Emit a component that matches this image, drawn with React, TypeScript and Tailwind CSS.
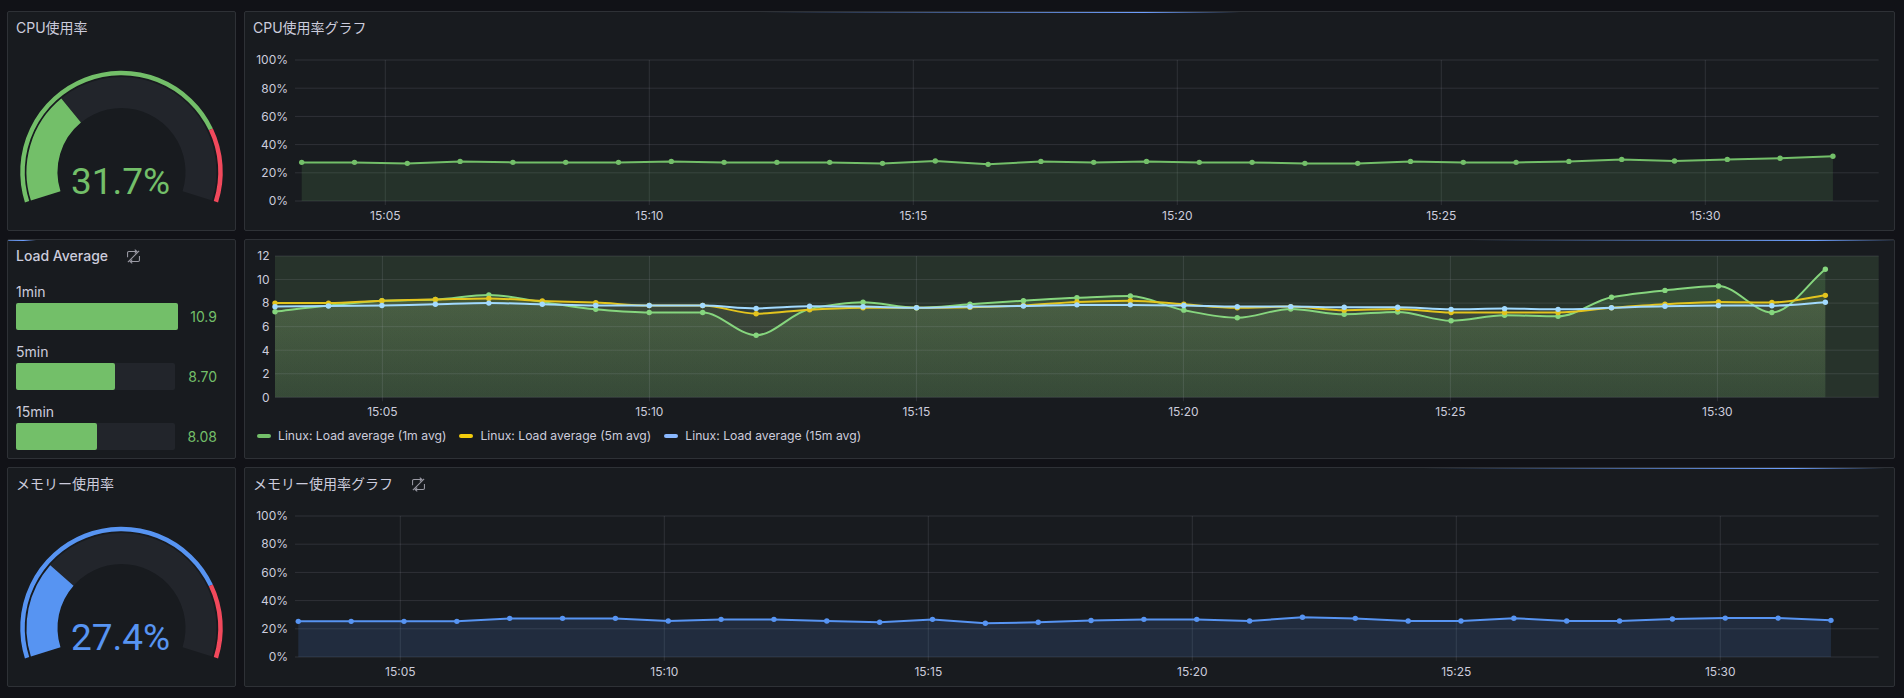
import type { ReactNode } from "react";

const GREEN = "#73BF69";
const BLUE = "#5794F2";
const RED = "#F2495C";
const TRACK = "#22252B";
const GRID = "rgba(204,204,220,0.13)";

const cpuData = [
  27.4, 27.4, 26.7, 28.1, 27.4, 27.4, 27.4, 28.1, 27.4, 27.4, 27.4, 26.7, 28.4, 26, 28.1, 27.4, 28.1,
  27.4, 27.4, 26.7, 26.7, 28.1, 27.4, 27.4, 28.1, 29.5, 28.4, 29.5, 30.3, 31.7,
];
const memData = [
  25.3, 25.3, 25.3, 25.3, 27.4, 27.4, 27.4, 25.5, 26.7, 26.7, 25.5, 24.6, 26.7, 23.9, 24.6, 25.9, 26.7,
  26.7, 25.5, 28.2, 27.4, 25.5, 25.5, 27.5, 25.5, 25.5, 26.9, 27.6, 27.6, 26,
];
const load1 = [
  7.27, 7.8, 8.2, 8.3, 8.7, 8.1, 7.47, 7.2, 7.2, 5.27, 7.5, 8.07, 7.6, 7.9, 8.2, 8.45, 8.6, 7.4, 6.75,
  7.5, 7.05, 7.25, 6.5, 6.96, 6.88, 8.5, 9.08, 9.45, 7.2, 10.87,
];
const load5 = [
  8, 8, 8.2, 8.3, 8.4, 8.18, 8.04, 7.8, 7.8, 7.1, 7.44, 7.6, 7.6, 7.65, 7.8, 8.1, 8.2, 7.9, 7.6, 7.7,
  7.4, 7.5, 7.2, 7.2, 7.2, 7.6, 7.9, 8.1, 8.05, 8.66,
];
const load15 = [
  7.7, 7.75, 7.8, 7.9, 8, 7.9, 7.8, 7.8, 7.8, 7.55, 7.73, 7.7, 7.6, 7.7, 7.75, 7.85, 7.85, 7.8, 7.7,
  7.7, 7.65, 7.65, 7.47, 7.53, 7.47, 7.6, 7.73, 7.8, 7.78, 8.07,
];

type Pt = [number, number];

const linePath = (pts: Pt[]) => "M" + pts.map((p) => p[0].toFixed(1) + " " + p[1].toFixed(1)).join("L");

// same monotone cubic that uPlot's spline gives
const splinePath = (pts: Pt[]) => {
  const n = pts.length;
  const slopes: number[] = [];
  for (let i = 0; i < n - 1; i++) slopes.push((pts[i + 1][1] - pts[i][1]) / (pts[i + 1][0] - pts[i][0]));
  const t: number[] = [slopes[0]];
  for (let i = 1; i < n - 1; i++) {
    t.push(slopes[i - 1] * slopes[i] <= 0 ? 0 : (2 * slopes[i - 1] * slopes[i]) / (slopes[i - 1] + slopes[i]));
  }
  t.push(slopes[n - 2]);
  let d = "M" + pts[0][0].toFixed(1) + " " + pts[0][1].toFixed(1);
  for (let i = 0; i < n - 1; i++) {
    const h = (pts[i + 1][0] - pts[i][0]) / 3;
    d +=
      "C" +
      [pts[i][0] + h, pts[i][1] + t[i] * h, pts[i + 1][0] - h, pts[i + 1][1] - t[i + 1] * h, pts[i + 1][0], pts[i + 1][1]]
        .map((v) => v.toFixed(1))
        .join(" ");
  }
  return d;
};

const SyncOff = () => (
  <svg viewBox="0 0 24 24" className="ml-[18px] h-[15px] w-[15px] shrink-0" fill="none" stroke="#9a9aa4" strokeWidth="1.7">
    <path d="M2.5 13V6a2 2 0 0 1 2-2H17" />
    <path d="M14 1l3.5 3L14 7" />
    <path d="M21.5 11v7a2 2 0 0 1-2 2H7" />
    <path d="M10 17l-3.5 3 3.5 3" />
    <path d="M3 21 21 3" />
  </svg>
);

const Panel = ({
  title,
  medium,
  icon,
  bar,
  children,
}: {
  title?: string;
  medium?: boolean;
  icon?: boolean;
  bar?: string;
  children: ReactNode;
}) => (
  <div className="relative flex h-[220px] flex-col overflow-hidden rounded-[2px] border border-[#2e3136] bg-[#181b1f]">
    {bar && (
      <div
        className={
          "absolute top-0 h-[1px] bg-[linear-gradient(90deg,rgba(110,159,255,0)_0%,#6E9FFF_80%,rgba(110,159,255,0)_100%)] " + bar
        }
      />
    )}
    {title && (
      <div className={"flex h-[33px] shrink-0 items-center px-[8px] pb-[1px] text-sm text-[#ccccdc] " + (medium ? "font-medium" : "font-normal")}>
        <span>{title}</span>
        {icon && <SyncOff />}
      </div>
    )}
    {children}
  </div>
);

const polar = (cx: number, cy: number, r: number, deg: number): Pt => {
  const a = (deg * Math.PI) / 180;
  return [cx + r * Math.sin(a), cy - r * Math.cos(a)];
};

const arc = (r: number, from: number, to: number) => {
  const [x1, y1] = polar(121.5, 172, r, from);
  const [x2, y2] = polar(121.5, 172, r, to);
  return `M${x1.toFixed(2)} ${y1.toFixed(2)}A${r} ${r} 0 ${to - from > 180 ? 1 : 0} 1 ${x2.toFixed(2)} ${y2.toFixed(2)}`;
};

const Gauge = ({ value, color, textClass }: { value: number; color: string; textClass: string }) => {
  const start = -107.5;
  const sweep = 215;
  return (
    <svg viewBox="8 45 227 185" width="227" height="185" className="block" fill="none">
      <path d={arc(79.5, start, start + sweep)} stroke={TRACK} strokeWidth="31" />
      <path d={arc(79.5, start, start + (sweep * value) / 100)} stroke={color} strokeWidth="31" />
      <path d={arc(99, start, start + sweep * 0.8)} stroke={color} strokeWidth="4.5" />
      <path d={arc(99, start + sweep * 0.8, start + sweep)} stroke={RED} strokeWidth="4.5" />
      <text x="120.5" y="194.3" textAnchor="middle" className={"font-['Roboto',sans-serif] text-[37px] " + textClass}>
        {value.toFixed(1)}%
      </text>
    </svg>
  );
};

const ticks = ["15:05", "15:10", "15:15", "15:20", "15:25", "15:30"];

type AxisProps = {
  left: number;
  top: number;
  bottom: number;
  labelX: number;
  firstTick: number;
  tickStep: number;
  yLabels: string[];
};

const Axes = ({ left, top, bottom, labelX, firstTick, tickStep, yLabels }: AxisProps) => (
  <>
    {yLabels.map((l, i) => {
      const y = top + ((bottom - top) * i) / (yLabels.length - 1);
      return (
        <g key={l}>
          <line x1={left} x2={1878.7} y1={y} y2={y} stroke={GRID} />
          <text x={labelX} y={y + 4.3} textAnchor="end" className="fill-[#ccccdc] text-xs">
            {l}
          </text>
        </g>
      );
    })}
    {ticks.map((t, i) => {
      const x = firstTick + i * tickStep;
      return (
        <g key={t}>
          <line x1={x} x2={x} y1={top} y2={bottom + 4} stroke={GRID} />
          <text x={x} y={bottom + 19} textAnchor="middle" className="fill-[#ccccdc] text-xs">
            {t}
          </text>
        </g>
      );
    })}
  </>
);

const percent = ["100%", "80%", "60%", "40%", "20%", "0%"];

const PercentChart = ({
  data,
  color,
  y0,
  firstX,
  step,
  firstTick,
}: {
  data: number[];
  color: string;
  y0: number;
  firstX: number;
  step: number;
  firstTick: number;
}) => {
  const top = y0 - 141;
  const pts: Pt[] = data.map((v, i) => [firstX + i * step, y0 - v * 1.41]);
  const line = linePath(pts);
  const lastX = pts[pts.length - 1][0];
  return (
    <svg viewBox={`245 ${y0 - 156} 1649 185`} width="1649" height="185" className="block" fill="none">
      <Axes left={295} top={top} bottom={y0} labelX={288} firstTick={firstTick} tickStep={264} yLabels={percent} />
      <path d={`${line}L${lastX} ${y0}L${firstX} ${y0}Z`} fill={color} fillOpacity="0.15" />
      <path d={line} stroke={color} strokeWidth="2" />
      {pts.map((p, i) => (
        <circle key={i} cx={p[0]} cy={p[1]} r="2.7" fill={color} />
      ))}
    </svg>
  );
};

const loadSeries = [
  { data: load1, line: "#86D67E", area: "url(#loadGreen)" },
  { data: load5, line: "#E3C41E", area: "url(#loadYellow)" },
  { data: load15, line: "#A2DAFF", area: "url(#loadBlue)" },
];

const LoadChart = () => {
  const y0 = 397.3;
  const unit = 141.3 / 12;
  const x0 = 275;
  const step = 53.46;
  const lastX = x0 + 29 * step;
  return (
    <svg viewBox="245 240 1649 184" width="1649" height="184" className="block shrink-0" fill="none">
      <defs>
        <linearGradient id="loadGreen" x1="0" y1="0" x2="0" y2="1">
          <stop offset="0" stopColor="#73BF69" stopOpacity="0.2" />
          <stop offset="1" stopColor="#73BF69" stopOpacity="0.12" />
        </linearGradient>
        <linearGradient id="loadYellow" x1="0" y1="0" x2="0" y2="1">
          <stop offset="0" stopColor="#F2CC0C" stopOpacity="0.08" />
          <stop offset="1" stopColor="#F2CC0C" stopOpacity="0.02" />
        </linearGradient>
        <linearGradient id="loadBlue" x1="0" y1="0" x2="0" y2="1">
          <stop offset="0" stopColor="#8AB8FF" stopOpacity="0.08" />
          <stop offset="1" stopColor="#8AB8FF" stopOpacity="0.03" />
        </linearGradient>
      </defs>
      <rect x={x0} y={256} width={1878.7 - x0} height={y0 - 256} fill="#27332B" />
      {loadSeries.map((s) => {
        const d = splinePath(s.data.map((v, i): Pt => [x0 + i * step, y0 - v * unit]));
        return <path key={s.line} d={`${d}L${lastX} ${y0}L${x0} ${y0}Z`} fill={s.area} />;
      })}
      <Axes
        left={x0}
        top={256}
        bottom={y0}
        labelX={269.5}
        firstTick={382.4}
        tickStep={267}
        yLabels={["12", "10", "8", "6", "4", "2", "0"]}
      />
      {loadSeries.map((s) => {
        const pts = s.data.map((v, i): Pt => [x0 + i * step, y0 - v * unit]);
        return (
          <g key={s.line}>
            <path d={splinePath(pts)} stroke={s.line} strokeWidth="2" />
            {pts.map((p, i) => (
              <circle key={i} cx={p[0]} cy={p[1]} r="2.7" fill={s.line} />
            ))}
          </g>
        );
      })}
    </svg>
  );
};

const legend = [
  { label: "Linux: Load average (1m avg)", swatch: "bg-[#73bf69]" },
  { label: "Linux: Load average (5m avg)", swatch: "bg-[#f2cc0c]" },
  { label: "Linux: Load average (15m avg)", swatch: "bg-[#8ab8ff]" },
];

const bars = [
  { label: "1min", track: "w-[162px]", fill: "w-[162px]", value: "10.9" },
  { label: "5min", track: "w-[159px]", fill: "w-[99px]", value: "8.70" },
  { label: "15min", track: "w-[159px]", fill: "w-[81px]", value: "8.08" },
];

const App = () => (
  <div className="min-h-screen bg-[#111217] pl-[7px] pt-[11px] font-['Inter','Noto_Sans_CJK_JP',sans-serif]">
    <div className="grid w-[1888px] grid-cols-[229px_1651px] gap-[8px]">
      <Panel title="CPU使用率">
        <Gauge value={31.7} color={GREEN} textClass="fill-[#73bf69]" />
      </Panel>
      <Panel title="CPU使用率グラフ" bar="left-[515px] w-[480px]">
        <PercentChart data={cpuData} color={GREEN} y0={201} firstX={301.7} step={52.8} firstTick={385.3} />
      </Panel>

      <Panel title="Load Average" medium icon bar="left-[-36px] w-[64px]">
        <div className="flex flex-col gap-[10px] px-[8px] pt-[7px]">
          {bars.map((b) => (
            <div key={b.label} className="flex flex-col">
              <div className="flex h-[23px] items-center text-sm text-[#ccccdc]">{b.label}</div>
              <div className="flex h-[27px] items-center justify-between pr-[10px]">
                <div className={"h-full rounded-[2px] bg-[#22252b] " + b.track}>
                  <div className={"h-full rounded-[2px] bg-[#73bf69] " + b.fill} />
                </div>
                <span className="text-sm text-[#73bf69]">{b.value}</span>
              </div>
            </div>
          ))}
        </div>
      </Panel>
      <Panel bar="left-[1225px] w-[430px]">
        <LoadChart />
        <div className="flex h-[24px] items-center gap-[13px] pl-[12px] text-[12.2px] text-[#ccccdc]">
          {legend.map((l) => (
            <div key={l.label} className="flex items-center gap-[7px]">
              <span className={"h-[4px] w-[14px] rounded-full " + l.swatch} />
              <span>{l.label}</span>
            </div>
          ))}
        </div>
      </Panel>

      <Panel title="メモリー使用率">
        <Gauge value={27.4} color={BLUE} textClass="fill-[#5794f2]" />
      </Panel>
      <Panel title="メモリー使用率グラフ" icon bar="left-[1178px] w-[462px]">
        <PercentChart data={memData} color={BLUE} y0={657.3} firstX={298.3} step={52.85} firstTick={400.3} />
      </Panel>
    </div>
  </div>
);

export default App;
